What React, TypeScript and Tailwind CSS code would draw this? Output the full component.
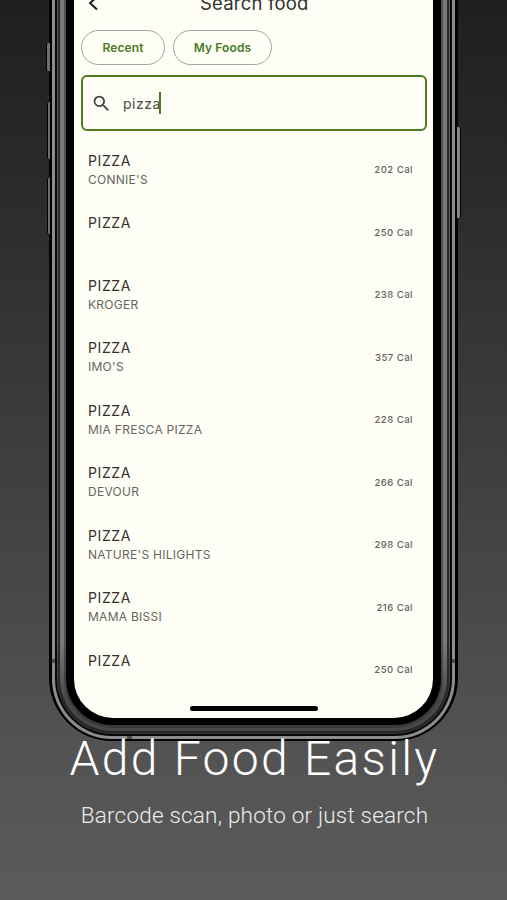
import { useState } from 'react';

type Food = { id: number; name: string; brand?: string; calories: number };

const foods: Food[] = [
  { id: 1, name: 'PIZZA', brand: "CONNIE'S", calories: 202 },
  { id: 2, name: 'PIZZA', calories: 250 },
  { id: 3, name: 'PIZZA', brand: 'KROGER', calories: 238 },
  { id: 4, name: 'PIZZA', brand: "IMO'S", calories: 357 },
  { id: 5, name: 'PIZZA', brand: 'MIA FRESCA PIZZA', calories: 228 },
  { id: 6, name: 'PIZZA', brand: 'DEVOUR', calories: 266 },
  { id: 7, name: 'PIZZA', brand: "NATURE'S HILIGHTS", calories: 298 },
  { id: 8, name: 'PIZZA', brand: 'MAMA BISSI', calories: 216 },
  { id: 9, name: 'PIZZA', calories: 250 },
];

function FoodRow({ food }: { food: Food }) {
  return (
    <li className="flex h-[62.5px] items-center justify-between pr-[20px] pl-[14px]">
      <div className="h-[38px]">
        <div className="text-[14px] leading-[19px] tracking-[0.6px] text-[#30312c]">{food.name}</div>
        <div className="text-[12px] leading-[19px] tracking-[0.27px] text-[#65665f]">{food.brand}</div>
      </div>
      <span className="mt-[1px] text-[9.5px] leading-[14px] font-medium tracking-[0.5px] text-[#62635d]">
        {food.calories} Cal
      </span>
    </li>
  );
}

function SearchScreen() {
  const [query] = useState('pizza');

  return (
    <div className="flex h-[718px] flex-col overflow-hidden rounded-b-[39px] bg-[#fefef6] font-[Inter,sans-serif]">
      <header className="flex h-[30px] shrink-0 items-start">
        <svg width="12" height="14" viewBox="0 0 12 14" className="mt-[-4px] ml-[13px]" fill="none">
          <path d="M10 1L3 7L10 13.5" stroke="#1e1f1b" strokeWidth="2" />
        </svg>
        <h1 className="mt-[-9px] ml-[101px] text-[18.5px] leading-[25px] tracking-[0.2px] text-[#30312c]">
          Search food
        </h1>
      </header>

      <div className="flex shrink-0 gap-[8px] pl-[7px]">
        <button className="h-[35px] w-[84px] rounded-full border border-[#a3a49d] text-[12px] font-semibold tracking-[0.1px] text-[#4b7a1f]">
          Recent
        </button>
        <button className="h-[35px] w-[99px] rounded-full border border-[#a3a49d] text-[12px] font-semibold tracking-[0.1px] text-[#4b7a1f]">
          My Foods
        </button>
      </div>

      <div className="mr-[6px] ml-[7px] mt-[10px] flex h-[56px] shrink-0 items-center rounded-[6px] border-2 border-[#4b7a1f] pl-[8px]">
        <svg width="21" height="21" viewBox="0 0 24 24" fill="#454640">
          <path d="M15.5 14h-.79l-.28-.27A6.47 6.47 0 0 0 16 9.5 6.5 6.5 0 1 0 9.5 16c1.61 0 3.09-.59 4.23-1.57l.27.28v.79l5 4.99L20.49 19l-4.99-5zm-6 0C7.01 14 5 11.99 5 9.5S7.01 5 9.5 5 14 7.01 14 9.5 11.99 14 9.5 14z" />
        </svg>
        <span className="ml-[11px] text-[14px] tracking-[0.5px] text-[#4a4b45]">{query}</span>
        <span className="ml-[-1.5px] h-[22px] w-[2px] bg-[#4b7a1f]" />
      </div>

      <ul className="mt-[7.5px] h-[563px] shrink-0">
        {foods.map((food) => (
          <FoodRow key={food.id} food={food} />
        ))}
      </ul>
    </div>
  );
}

function Phone() {
  return (
    <div className="relative mx-auto w-[409px]">
      {/* side buttons */}
      <span className="absolute top-[43px] left-[-3px] h-[28px] w-[4px] rounded-l-[2px] border-l border-black bg-[#6e6e6e]" />
      <span className="absolute top-[102px] left-[-2px] h-[57px] w-[3px] rounded-l-[2px] border-l border-black bg-[#6e6e6e]" />
      <span className="absolute top-[178px] left-[-2px] h-[56px] w-[3px] rounded-l-[2px] border-l border-black bg-[#6e6e6e]" />
      <span className="absolute top-[127px] right-[-3px] h-[91px] w-[4px] rounded-r-[2px] border-r border-black bg-[#858585]" />

      {/* metal frame, outermost ring first */}
      <div className="rounded-b-[63px] bg-black px-[3px] pb-[2px]">
        <div className="rounded-b-[60px] bg-[#8c8c8c] px-[3px] pb-[3px]">
          <div className="rounded-b-[57px] bg-[#080808] px-[2px] pb-[2px]">
            <div className="rounded-b-[55px] bg-[linear-gradient(#5c5c5c_640px,#333_700px)] px-[1px] pb-[1px]">
              <div className="rounded-b-[54px] bg-[linear-gradient(#2a2a2a_640px,#262626_700px)] px-[2px] pb-[2px]">
                <div className="rounded-b-[52px] bg-[linear-gradient(#7a7a7a_640px,#484848_700px)] px-[4px] pb-[3px]">
                  <div className="rounded-b-[49px] bg-[linear-gradient(#505050_640px,#3a3a3a_700px)] px-[2px] pb-[3px]">
                    <div className="rounded-b-[46px] bg-black px-[8px] pb-[7px]">
                      <SearchScreen />
                    </div>
                  </div>
                </div>
              </div>
            </div>
          </div>
        </div>
      </div>

      {/* antenna bands */}
      <span className="absolute top-[659px] left-[3px] h-[4px] w-[3px] bg-[#4a4a4a]" />
      <span className="absolute top-[659px] right-[3px] h-[4px] w-[3px] bg-[#4a4a4a]" />
      <span className="absolute bottom-[2px] left-[78px] h-[3px] w-[5px] bg-[#4a4a4a]" />
      {/* home indicator */}
      <span className="absolute top-[706px] left-[141px] h-[5px] w-[128px] rounded-full bg-black" />
    </div>
  );
}

export default function App() {
  return (
    <main className="h-[900px] w-[507px] overflow-hidden bg-[linear-gradient(#1f1f1f,#272727_15%,#505050_78%,#5b5b5b)]">
      <Phone />
      <div className="relative mt-[-10px] pl-[2px] text-center font-[Roboto,sans-serif] font-light text-white">
        <h2 className="text-[48px] leading-[56px] tracking-[2.3px] whitespace-nowrap">Add Food Easily</h2>
        <p className="mt-[14px] text-[22.5px] leading-[28px] tracking-[0.2px] whitespace-nowrap text-[#ededed]">
          Barcode scan, photo or just search
        </p>
      </div>
    </main>
  );
}
